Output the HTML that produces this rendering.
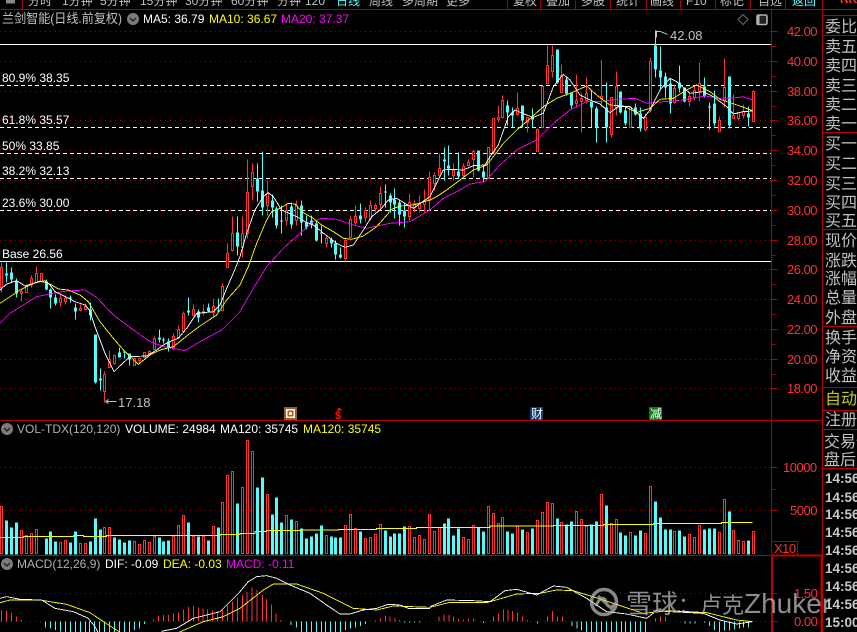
<!DOCTYPE html>
<html><head><meta charset="utf-8"><title>兰剑智能</title>
<style>
html,body{margin:0;padding:0;background:#000;width:857px;height:632px;overflow:hidden}
svg{display:block;position:absolute;left:0;top:0}
text{font-family:"Liberation Sans","WenQuanYi Zen Hei","Noto Sans CJK SC",sans-serif;font-size:12px;white-space:pre}
.cj{font-family:"WenQuanYi Zen Hei","Noto Sans CJK SC",sans-serif;font-size:16px;fill:#c0c0c0}
.tb{font-family:"Liberation Sans","WenQuanYi Zen Hei","Noto Sans CJK SC",sans-serif;font-size:12px;fill:#c0c0c0}
.ax{font-size:13px;fill:#ff3232;letter-spacing:-.5px}
.tm{font-size:13.5px;font-weight:bold;fill:#c8c8c8}
</style></head><body>
<svg width="857" height="632" viewBox="0 0 857 632" shape-rendering="crispEdges">
<!-- grid dotted -->
<g stroke="#a80000" stroke-width="1" stroke-dasharray="1 4" fill="none">
<path d="M0 31.5H772M0 61.5H772M0 91.5H772M0 120.5H772M0 150.5H772M0 180.5H772M0 210.5H772M0 240.5H772M0 269.5H772M0 299.5H772M0 329.5H772M0 359.5H772M0 388.5H772M0 467.5H772M0 510.5H772M0 593.5H772M0 621.5H772"/>
</g>
<!-- fib lines -->
<g stroke="#fff" fill="none">
<path d="M0 44.5H772M0 261.5H772"/>
<path stroke-dasharray="4 3" d="M0 85.5H772M0 127.5H772M0 153.5H772M0 178.5H772M0 210.5H772"/>
</g>
<!-- candles -->
<g transform="translate(.5,.5)" fill="none">
<path stroke="#ff3232" d="M1 262V292M21 288V301M26 284V292M31 275V287M36 266V283M41 272V282M60 294V306M65 295V304M80 304V311M85 303V309M104 371V402M109 350V367M114 354V364M134 357V365M139 357V362M144 352V357M149 350V355M154 336V349M173 333V349M178 325V338M183 311V332M193 304V316M203 304V315M213 298V317M222 283V311M227 243V267M232 216V251M242 216V257M247 159V238M252 163V200M267 180V215M286 203V225M296 200V225M326 235V247M345 238V261M350 215V238M355 205V225M365 207V222M370 200V220M375 203V212M380 186V210M409 193V220M414 200V212M419 195V212M424 189V212M429 171V210M434 172V190M439 153V176M453 163V180M463 163V177M468 159V166M473 149V177M488 147V178M493 118V152M498 105V122M502 95V118M517 92V115M527 117V132M537 128V151M542 85V127M547 45V83M552 45V77M561 64V92M576 74V107M581 93V132M586 77V103M601 60V107M611 97V137M616 71V115M630 107V127M645 113V131M650 57V112M674 85V103M689 93V106M694 85V100M699 62V101M719 116V131M724 58V107M733 94V118M738 112V120M743 104V118M753 90V121"/>
<path stroke="#ff3232" fill="#000" d="M0 267h2V287h-2zM20 291h2V293h-2zM25 285h2V292h-2zM30 278h2V284h-2zM35 273h2V282h-2zM40 273h2V281h-2zM59 298h2V302h-2zM64 298h2V301h-2zM79 308h2V310h-2zM84 306h2V309h-2zM103 374h2V391h-2zM108 359h2V367h-2zM113 355h2V363h-2zM133 358h2V365h-2zM138 358h2V360h-2zM143 352h2V357h-2zM148 351h2V353h-2zM153 338h2V349h-2zM172 336h2V347h-2zM177 329h2V337h-2zM182 313h2V331h-2zM192 309h2V315h-2zM202 311h2V313h-2zM212 306h2V312h-2zM221 286h2V310h-2zM226 253h2V267h-2zM231 233h2V250h-2zM241 233h2V247h-2zM246 192h2V233h-2zM251 172h2V186h-2zM266 193h2V205h-2zM285 210h2V220h-2zM295 205h2V220h-2zM325 238h2V243h-2zM344 240h2V258h-2zM349 219h2V237h-2zM354 216h2V222h-2zM364 210h2V217h-2zM369 205h2V218h-2zM374 205h2V208h-2zM379 193h2V204h-2zM408 202h2V216h-2zM413 203h2V207h-2zM418 203h2V208h-2zM423 200h2V204h-2zM428 177h2V200h-2zM433 175h2V183h-2zM438 168h2V175h-2zM452 170h2V175h-2zM462 166h2V175h-2zM467 162h2V165h-2zM472 151h2V159h-2zM487 147h2V178h-2zM492 118h2V152h-2zM497 117h2V119h-2zM501 100h2V117h-2zM516 108h2V114h-2zM526 117h2V122h-2zM536 129h2V151h-2zM541 86h2V127h-2zM546 65h2V83h-2zM551 55h2V71h-2zM560 75h2V92h-2zM575 100h2V103h-2zM580 98h2V101h-2zM585 93h2V100h-2zM600 96h2V98h-2zM610 97h2V134h-2zM615 86h2V107h-2zM629 107h2V127h-2zM644 117h2V129h-2zM649 61h2V110h-2zM673 88h2V102h-2zM688 96h2V101h-2zM693 90h2V97h-2zM698 83h2V91h-2zM718 120h2V131h-2zM723 87h2V100h-2zM732 115h2V118h-2zM737 112h2V118h-2zM742 111h2V115h-2zM752 91h2V121h-2z"/>
<path stroke="#54fcfc" d="M6 262V282M11 267V282M16 278V297M46 279V290M50 288V308M55 294V305M70 295V302M75 303V319M90 302V320M95 334V383M100 368V390M119 347V357M124 350V358M129 353V365M159 329V342M163 337V343M168 338V351M188 297V315M198 309V322M208 303V311M218 298V312M237 216V255M257 163V201M262 151V215M272 194V217M276 206V228M281 205V233M291 202V228M301 200V235M306 215V229M311 215V228M316 220V241M321 225V243M331 237V247M335 240V259M340 247V258M360 203V223M385 184V207M390 193V212M394 188V218M399 200V225M404 203V227M444 147V180M448 145V175M458 152V178M478 150V171M483 165V181M507 100V125M512 107V127M522 105V127M532 108V127M557 49V83M566 77V95M571 92V108M591 90V127M596 106V142M606 82V142M620 91V113M625 107V125M635 103V115M640 107V131M655 30V77M660 46V88M665 72V97M670 78V113M679 65V92M684 87V102M704 77V97M709 102V129M714 90V126M729 76V128M748 106V126"/>
<path stroke="#54fcfc" stroke-width="3" d="M6 273V275M11 272V279M16 281V293M46 281V289M50 289V297M55 297V303M70 297V298M75 307V311M90 309V315M95 334V382M100 378V380M119 352V357M124 351V352M129 353V359M159 337V339M163 339V340M168 341V347M188 310V312M198 311V317M208 307V311M218 310V311M237 232V246M257 178V191M262 190V207M272 200V207M276 208V225M281 220V221M291 206V224M301 205V222M306 222V227M311 220V224M316 223V240M321 232V233M331 239V243M335 243V254M340 254V257M360 215V219M385 191V192M390 195V202M394 199V204M399 202V214M404 210V216M444 159V161M448 165V168M458 171V176M478 150V170M483 171V177M507 105V112M512 112V115M522 105V120M532 116V119M557 49V82M566 79V93M571 92V105M591 101V107M596 108V127M606 107V127M620 91V112M625 110V123M635 107V114M640 113V128M655 45V69M660 70V77M665 76V87M670 83V103M679 82V88M684 87V101M704 86V96M709 106V107M714 103V123M729 76V125M748 113V117"/>
</g>
<!-- MA lines -->
<g transform="scale(.33333)" fill="none" stroke-width="2.7" stroke-linejoin="round">
<g stroke="#ff00ff">
<path transform="translate(0,630)" d="M0 340L30 310L70 285L110 260L160 250L200 243L255 240L290 262L340 315L400 360L450 395L500 412L555 422L600 395L665 360L720 305L760 235L800 170L850 115L900 70L940 35L965 25L1010 28L1060 45L1100 55L1170 40L1230 35L1290 0"/>
<path transform="translate(1290,0)" d="M0 630L40 595L80 575L120 552L165 545L210 495L260 450L320 420L370 370L420 330L470 305L510 305L560 298L615 295L650 310L700 305L760 300L825 288L870 295L920 293L940 290L968 300"/>
</g>
<g stroke="#ffff00">
<path transform="translate(0,630)" d="M0 280L30 260L60 240L90 225L120 213L150 222L175 237L205 240L240 255L265 275L300 335L340 385L375 425L415 463L450 435L480 420L520 410L560 378L600 348L650 315L680 270L720 225L745 170L770 100L800 30L815 5L840 -5L865 -20L885 -18L905 5L940 25L965 45L1000 65L1030 85L1055 88L1090 78L1130 50L1165 10L1170 0L1200 -12L1240 -15L1290 -30L1310 -40L1340 -60L1380 -90L1420 -120L1460 -135L1480 -160L1510 -200"/>
<path transform="translate(1290,0)" d="M220 430L260 390L290 365L340 320L380 295L420 280L470 258L500 285L540 315L580 318L620 338L660 325L690 298L730 295L770 270L800 255L840 275L870 298L930 318L968 332"/>
</g>
<g stroke="#fff">
<path transform="translate(0,630)" d="M0 240L20 222L50 212L75 228L105 218L135 212L150 225L165 245L200 262L225 275L255 285L268 300L285 350L315 430L342 485L370 458L390 440L440 438L470 420L490 405L515 392L535 385L560 355L590 310L640 305L660 285L680 235L700 190L720 140L740 70L765 0L790 -40L805 -52L820 -40L845 0L890 20L915 35L940 45L965 65L990 85L1010 100L1035 112L1060 105L1090 60L1115 20L1140 0L1165 -30L1190 -35L1215 -20L1240 -5L1290 -40"/>
<path transform="translate(1290,0)" d="M0 590L25 540L40 510L60 508L100 510L130 497L165 495L180 470L205 435L235 350L255 330L290 345L310 352L340 340L370 260L400 223L420 240L450 285L480 300L510 312L540 338L565 320L600 320L640 355L660 330L690 270L720 235L740 245L780 280L820 275L850 290L890 320L910 342L940 335L968 333"/>
</g>
</g>
<!-- flags -->
<path d="M656 30V31H660M656 31V37M660 31L667 34M105 401H116M105 401L108 399M105 401L108 403" stroke="#c0c0c0" fill="none" transform="translate(.5,.5)"/>
<!-- Volume -->
<g transform="translate(.5,.5)" fill="none">
<path stroke="#54fcfc" stroke-width="3" d="M6 520V554M11 527V554M16 522V554M46 538V554M50 531V554M55 541V554M70 542V554M75 531V554M90 541V554M95 518V554M100 529V554M114 537V554M119 539V554M124 542V554M129 540V554M159 537V554M163 541V554M168 540V554M188 522V554M198 536V554M208 540V554M218 527V554M237 503V554M257 487V554M262 477V554M272 514V554M276 497V554M281 522V554M291 519V554M301 528V554M306 538V554M311 536V554M316 533V554M321 525V554M331 536V554M335 537V554M340 537V554M360 531V554M385 530V554M390 536V554M394 533V554M399 533V554M404 526V554M444 523V554M448 518V554M453 535V554M458 528V554M478 527V554M483 531V554M507 531V554M512 533V554M522 529V554M532 528V554M557 518V554M566 524V554M571 521V554M591 524V554M596 521V554M606 505V554M620 532V554M625 535V554M635 535V554M640 530V554M655 501V554M660 517V554M665 529V554M670 529V554M679 530V554M684 536V554M704 529V554M709 528V554M714 528V554M729 511V554M748 540V554"/>
<path stroke="#ff3232" d="M0 506h2V553h-2zM20 530h2V553h-2zM25 535h2V553h-2zM30 533h2V553h-2zM35 529h2V553h-2zM59 542h2V553h-2zM64 540h2V553h-2zM79 543h2V553h-2zM84 543h2V553h-2zM103 527h2V553h-2zM108 527h2V553h-2zM133 541h2V553h-2zM138 544h2V553h-2zM143 540h2V553h-2zM148 542h2V553h-2zM153 536h2V553h-2zM172 536h2V553h-2zM177 525h2V553h-2zM182 515h2V553h-2zM192 536h2V553h-2zM202 536h2V553h-2zM212 526h2V553h-2zM221 502h2V553h-2zM226 475h2V553h-2zM231 471h2V553h-2zM241 487h2V553h-2zM246 440h2V553h-2zM251 451h2V553h-2zM266 494h2V553h-2zM285 515h2V553h-2zM295 521h2V553h-2zM325 535h2V553h-2zM344 525h2V553h-2zM349 514h2V553h-2zM354 528h2V553h-2zM364 538h2V553h-2zM369 537h2V553h-2zM374 534h2V553h-2zM379 524h2V553h-2zM408 526h2V553h-2zM413 537h2V553h-2zM418 535h2V553h-2zM423 539h2V553h-2zM428 514h2V553h-2zM433 531h2V553h-2zM438 527h2V553h-2zM462 537h2V553h-2zM467 539h2V553h-2zM472 525h2V553h-2zM487 506h2V553h-2zM492 513h2V553h-2zM497 523h2V553h-2zM501 517h2V553h-2zM516 526h2V553h-2zM526 532h2V553h-2zM536 520h2V553h-2zM541 512h2V553h-2zM546 502h2V553h-2zM551 503h2V553h-2zM560 522h2V553h-2zM575 511h2V553h-2zM580 519h2V553h-2zM585 526h2V553h-2zM600 494h2V553h-2zM610 523h2V553h-2zM615 519h2V553h-2zM629 532h2V553h-2zM644 533h2V553h-2zM649 486h2V553h-2zM673 531h2V553h-2zM688 534h2V553h-2zM693 537h2V553h-2zM698 525h2V553h-2zM718 532h2V553h-2zM723 499h2V553h-2zM732 530h2V553h-2zM737 540h2V553h-2zM742 541h2V553h-2zM752 531h2V553h-2z"/>
</g>
<g transform="scale(.33333)" fill="none" stroke-width="3">
<path stroke="#ffff00" transform="translate(0,1260)" d="M0 352H70V350H220V347H250V350H320V346H660V343H720V340H765V335H800V331H900V330H1015V328H1130V326H1250V322H1290"/>
<path stroke="#ffff00" transform="translate(1290,1260)" d="M0 322H180V318H370V316H520V314H670V311H875V308H968"/>
<!-- MACD bars -->
<path stroke="#ff3232" transform="translate(0,1260)" d="M4 604V570M19 604V573M34 604V578M49 604V590M64 604V600M461 604V598M475 604V588M490 604V585M505 604V585M520 604V580M535 604V577M550 604V568M565 604V561M580 604V558M595 604V563M609 604V566M622 604V569M637 604V572M652 604V575M667 604V570M682 604V556M697 604V545M712 604V533M727 604V525M741 604V516M756 604V502M771 604V510M787 604V525M800 604V537M814 604V554M828 604V580M843 604V600M1126 604V601M1141 604V594M1156 604V587M1170 604V590M1185 604V594M1199 604V600"/>
<path stroke="#ff3232" transform="translate(1290,1260)" d="M27 604V590M42 604V583M57 604V585M71 604V590M86 604V597M101 604V598M116 604V596M131 604V595M190 604V590M205 604V580M220 604V568M234 604V570M248 604V573M263 604V577M278 604V590M293 604V600M352 604V590M367 604V573M382 604V590M397 604V590M676 604V594M691 604V590M706 604V590"/>
<path stroke="#54fcfc" transform="translate(0,1260)" d="M136 604V622M151 604V625M166 604V630M181 604V634M196 604V640M211 604V640M226 604V640M241 604V640M256 604V640M269 604V640M284 604V640M299 604V640M314 604V640M328 604V640M343 604V640M358 604V640M373 604V640M388 604V640M403 604V630M418 604V625M433 604V612M873 604V615M889 604V622M904 604V640M919 604V640M934 604V640M949 604V640M964 604V640M977 604V640M991 604V640M1006 604V640M1021 604V640M1036 604V630M1051 604V625M1066 604V622M1081 604V618M1096 604V612M1214 604V608M1228 604V608M1243 604V607M1258 604V608"/>
<path stroke="#54fcfc" transform="translate(1290,1260)" d="M160 604V609M322 604V611M426 604V618M441 604V625M455 604V632M470 604V640M485 604V640M500 604V640M514 604V640M529 604V640M544 604V640M559 604V640M574 604V640M587 604V640M602 604V640M617 604V640M632 604V640M647 604V636M765 604V610M780 604V610M795 604V610M823 604V607M838 604V618M853 604V630M868 604V640M883 604V632M898 604V632M913 604V628M928 604V625M941 604V623M955 604V622"/>
<!-- MACD lines -->
<path stroke="#ffff00" stroke-width="2.7" transform="translate(0,1260)" d="M0 548L30 540H120L200 553L270 578L310 605L365 640M530 640L610 605L670 590L720 565L790 510L820 492H890L970 520L1060 565L1130 570L1180 558L1290 562"/>
<path stroke="#ffff00" stroke-width="2.7" transform="translate(1290,1260)" d="M0 562L60 547L170 548L260 522L330 520L380 510L430 512L520 540L640 580L720 572L830 578L920 600L968 605"/>
<path stroke="#fff" stroke-width="2.7" transform="translate(0,1260)" d="M0 535L20 530L60 538L125 540L165 565L220 575L265 595L285 620L295 640M485 634L530 625L580 595L660 575L690 545L720 515L745 485L770 470L800 467L830 475L870 495L930 520L980 555L1020 582L1050 582L1090 570L1130 565L1165 553L1200 555L1225 565L1290 565"/>
<path stroke="#fff" stroke-width="2.7" transform="translate(1290,1260)" d="M0 560L50 540L130 542L180 545L225 512L260 508L320 525L370 498L410 502L470 535L530 575L590 582L650 595L680 572L720 575L820 580L870 600L920 612L968 605"/>
</g>
<!-- frame -->
<g stroke="#b00000" fill="none" transform="translate(.5,.5)">
<path d="M0 9H857M22 0V9M507 0V9M540 0V9M575 0V9M610 0V9M646 0V9M680 0V9M715 0V9M750 0V9M785 0V9"/>
<path d="M0 420H822M0 555H822M771 9V632M822 0V632M822 15H857M822 35H857M822 132H857M822 229H857M822 326H857M822 387H857M822 410H857M822 429H857M822 468H857"/>
<path d="M771 31H777M771 61H777M771 91H777M771 120H777M771 150H777M771 180H777M771 210H777M771 240H777M771 269H777M771 299H777M771 329H777M771 359H777M771 388H777M771 46H775M771 76H775M771 106H775M771 135H775M771 165H775M771 195H775M771 225H775M771 255H775M771 284H775M771 314H775M771 344H775M771 374H775M771 467H777M771 510H777M771 489H775M771 593H777M771 621H777"/>
<path d="M771 541H797V555"/>
</g>
<path d="M772 555.5H823M772 555V632M821.5 555V632" stroke="#c00000" stroke-width="2" fill="none"/>
<!-- icons -->
<g fill="#7c7c7c" shape-rendering="geometricPrecision">
<circle cx="133" cy="19" r="6"/><circle cx="7" cy="429" r="6"/><circle cx="7" cy="564" r="6"/>
</g>
<path d="M130 18l3 3 3-3M4 428l3 3 3-3M4 563l3 3 3-3" stroke="#222" stroke-width="1.4" fill="none" shape-rendering="geometricPrecision"/>
<path d="M743 14.5l5 5-5 5-5-5z" fill="none" stroke="#6c6c6c" shape-rendering="geometricPrecision"/>
<rect x="757" y="15" width="10" height="9.5" rx="1.5" fill="#222" stroke="#b0b0b0" stroke-width="1.6" shape-rendering="geometricPrecision"/>
<rect x="756.5" y="15" width="3" height="10" fill="#b0b0b0"/>
<rect x="6" y="0" width="9" height="3.5" fill="#888"/>
<!-- markers -->
<rect x="284" y="407" width="13" height="13" fill="#a45a20"/>
<rect x="286" y="409" width="9" height="9" fill="#fff"/><rect x="287.500" y="410.500" width="6" height="6" fill="#a45a20"/><rect x="289" y="412" width="3" height="3" fill="#fff"/>
<rect x="530" y="407" width="13" height="13" fill="#0a3a6e"/>
<rect x="649" y="407" width="13" height="13" fill="#0a8010"/>
<path d="M339 407.500l3 3h-6z" fill="#ff1010"/>
</svg>
<svg width="857" height="632" viewBox="0 0 857 632">
<!-- toolbar -->
<g class="tb">
<text x="28" y="5" class="tb">分时</text><text x="62" y="5" class="tb">1分钟</text><text x="100" y="5" class="tb">5分钟</text><text x="140" y="5" class="tb">15分钟</text><text x="185" y="5" class="tb">30分钟</text><text x="231" y="5" class="tb">60分钟</text><text x="277" y="5" class="tb">分钟</text><text x="305" y="5" class="tb">120</text><text x="336" y="5" class="tb" style="fill:#54fcfc">日线</text><text x="369" y="5" class="tb">周线</text><text x="402" y="5" class="tb">多周期</text><text x="446" y="5" class="tb">更多</text>
<text x="513" y="5" class="tb">复权</text><text x="546" y="5" class="tb">叠加</text><text x="581" y="5" class="tb">多股</text><text x="616" y="5" class="tb">统计</text><text x="650" y="5" class="tb">画线</text><text x="686" y="5" class="tb">F10</text><text x="720" y="5" class="tb">标记</text><text x="758" y="5" class="tb">自选</text><text x="792" y="5" class="tb" style="fill:#54fcfc">返回</text>
<text x="840" y="3" style="fill:#ff3232;font-weight:bold">RK</text>
</g>
<!-- titles -->
<text x="2" y="23" textLength="120" lengthAdjust="spacingAndGlyphs" style="fill:#c0c0c0;font-size:13px">兰剑智能(日线.前复权)</text>
<text x="143" y="23" fill="#fff">MA5: 36.79</text>
<text x="209" y="23" fill="#ffff00">MA10: 36.67</text>
<text x="281" y="23" fill="#ff00ff">MA20: 37.37</text>
<g fill="#fff">
<text x="2" y="82">80.9% 38.35</text>
<text x="2" y="124">61.8% 35.57</text>
<text x="2" y="150">50% 33.85</text>
<text x="2" y="175">38.2% 32.13</text>
<text x="2" y="207">23.6% 30.00</text>
<text x="2" y="258">Base 26.56</text>
</g>
<text x="670" y="40" style="fill:#c0c0c0;font-size:13px">42.08</text>
<text x="118" y="407" style="fill:#c0c0c0;font-size:13px">17.18</text>
<text x="531" y="418" style="fill:#fff;font-size:12px">财</text>
<text x="650" y="418" style="fill:#fff;font-size:12px">减</text>
<text x="335" y="419" style="fill:#ff1010;font-size:11px;font-weight:bold">$</text>
<!-- vol title -->
<text x="17" y="433" fill="#b0b0b0">VOL-TDX(120,120)</text>
<text x="125" y="433" fill="#fff">VOLUME: 24984</text>
<text x="220" y="433" fill="#fff">MA120: 35745</text>
<text x="303" y="433" fill="#ffff00">MA120: 35745</text>
<text x="17" y="568" fill="#b0b0b0">MACD(12,26,9)</text>
<text x="105" y="568" fill="#fff">DIF: -0.09</text>
<text x="163" y="568" fill="#ffff00">DEA: -0.03</text>
<text x="226" y="568" fill="#ff00ff">MACD: -0.11</text>
<!-- axis -->
<g>
<text x="787" y="36" class="ax">42.00</text><text x="787" y="66" class="ax">40.00</text><text x="787" y="96" class="ax">38.00</text><text x="787" y="125" class="ax">36.00</text><text x="787" y="155" class="ax">34.00</text><text x="787" y="185" class="ax">32.00</text><text x="787" y="215" class="ax">30.00</text><text x="787" y="245" class="ax">28.00</text><text x="787" y="274" class="ax">26.00</text><text x="787" y="304" class="ax">24.00</text><text x="787" y="334" class="ax">22.00</text><text x="787" y="364" class="ax">20.00</text><text x="787" y="393" class="ax">18.00</text>
<text x="783" y="472" class="ax">10000</text><text x="790" y="515" class="ax">5000</text>
<text x="774" y="553" class="ax">X10</text>
<text x="794" y="598" class="ax">1.50</text><text x="794" y="626" class="ax">0.00</text>
</g>
<!-- right panel -->
<g>
<text x="825" y="32" class="cj">委比</text>
<text x="825" y="52" class="cj">卖五</text><text x="825" y="71" class="cj">卖四</text><text x="825" y="91" class="cj">卖三</text><text x="825" y="110" class="cj">卖二</text><text x="825" y="129" class="cj">卖一</text>
<text x="825" y="149" class="cj">买一</text><text x="825" y="169" class="cj">买二</text><text x="825" y="189" class="cj">买三</text><text x="825" y="208" class="cj">买四</text><text x="825" y="226" class="cj">买五</text>
<text x="825" y="246" class="cj">现价</text><text x="825" y="266" class="cj">涨跌</text><text x="825" y="284" class="cj">涨幅</text><text x="825" y="303" class="cj">总量</text><text x="825" y="323" class="cj">外盘</text>
<text x="825" y="343" class="cj">换手</text><text x="825" y="362" class="cj">净资</text><text x="825" y="381" class="cj">收益</text>
<text x="825" y="404" class="cj" style="fill:#c8c820">自动交</text>
<text x="825" y="425" class="cj">注册</text>
<text x="824" y="447" class="cj">交易信</text><text x="824" y="465" class="cj">盘后交</text>
<text x="825" y="483" class="tm">14:56</text><text x="825" y="502" class="tm">14:56</text><text x="825" y="519" class="tm">14:56</text><text x="825" y="537" class="tm">14:56</text><text x="825" y="555" class="tm">14:56</text><text x="825" y="573" class="tm">14:56</text><text x="825" y="591" class="tm">14:56</text><text x="825" y="609" class="tm">14:56</text><text x="825" y="627" class="tm">15:00</text>
</g>
<!-- watermark -->
<g opacity=".72">
<circle cx="604" cy="602" r="12.500" fill="none" stroke="#bdbdbd" stroke-width="3.500"/>
<path d="M596 606c4-10 9-9 10-4s6 7 9 1M598 596l14 13" fill="none" stroke="#bdbdbd" stroke-width="3"/>
<text x="626" y="613" style="font-family:'Noto Sans CJK SC',sans-serif;font-size:26px;font-weight:500;fill:#c4c4c4;stroke:#111;stroke-width:.4">雪球</text>
<text x="678" y="613" style="font-family:'Noto Sans CJK SC',sans-serif;font-size:22px;fill:#c4c4c4">：卢克</text>
<text x="744" y="613" style="font-size:28px;fill:#c4c4c4">Zhuker</text>
</g>
</svg>
</body></html>
